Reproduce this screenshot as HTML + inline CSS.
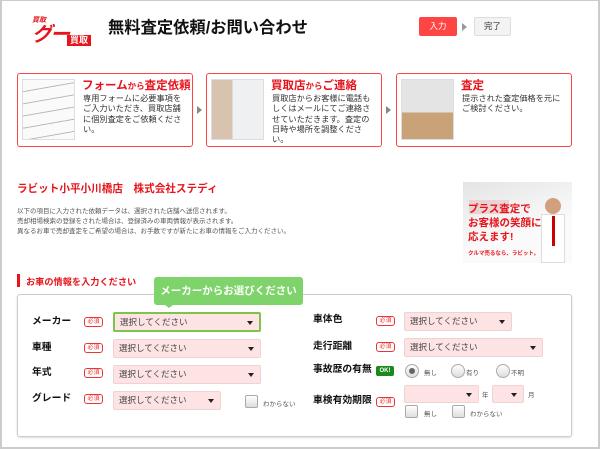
<!DOCTYPE html>
<html><head><meta charset="utf-8"><style>
*{margin:0;padding:0;box-sizing:border-box}
body{width:600px;height:449px;overflow:hidden;background:#fff;font-family:"Liberation Sans","Noto Sans CJK JP",sans-serif;position:relative;color:#222}
.a{position:absolute;white-space:nowrap}
.frame{left:0;top:0;width:600px;height:449px;border:2px solid #ccc;border-top:1px solid #ccc}
.step{border:1px solid #f44;border-radius:3px;height:74px;top:73px;width:176px;background:#fff}
.step .img{position:absolute;left:4px;top:5px;width:53px;height:61px;background:#e8e8e8;border:1px solid #ddd}
.step h3{position:absolute;left:64px;top:3px;color:#e6141c;font-size:11.5px;font-weight:bold;white-space:nowrap}
.step h3 small{font-size:8.5px}
.step p{position:absolute;left:65px;top:20px;font-size:8.2px;line-height:10.3px;color:#333;width:104px;white-space:normal}
.arr{width:0;height:0;border-left:5px solid #888;border-top:4px solid transparent;border-bottom:4px solid transparent;top:106px}
.lbl{font-size:9.8px;font-weight:bold;color:#111;line-height:12px}
.req{font-size:6px;color:#e33;border:1px solid #e33;border-radius:3px;width:19px;height:10px;line-height:8px;text-align:center;background:#fff}
.sel{background:#fde3e3;border:1px solid #efd3d3;border-radius:2px;height:19px;font-size:8.5px;color:#444;padding-left:5px;line-height:17px}
.sel:after{content:"";position:absolute;right:6px;top:7px;border-top:4px solid #222;border-left:3px solid transparent;border-right:3px solid transparent}
.cb{width:13px;height:13px;border:1px solid #aaa;border-radius:2px;background:linear-gradient(#fff,#ddd)}
.rd{width:14px;height:14px;border:1px solid #aaa;border-radius:50%;background:linear-gradient(#fff,#ddd)}
.sm{font-size:6.5px;color:#555}
</style></head><body>
<div class="a frame"></div>
<div class="a" style="left:32px;top:15px;font-size:7px;color:#e6141c;font-style:italic;font-weight:bold">買取</div>
<div class="a" style="left:32px;top:24px;font-size:20px;color:#e6141c;font-style:italic;font-weight:bold;letter-spacing:-2px;line-height:22px">グー</div>
<div class="a" style="left:67px;top:35px;width:24px;height:11px;background:#e6141c;color:#fff;font-size:9px;font-weight:bold;line-height:11px;text-align:center">買取</div>
<div class="a" style="left:108px;top:14px;font-size:16.3px;font-weight:bold;color:#111">無料査定依頼/お問い合わせ</div>
<div class="a" style="left:419px;top:17px;width:38px;height:19px;background:#f44;color:#fff;font-size:8.5px;text-align:center;line-height:19px;border-radius:2px">入力</div>
<div class="a" style="left:462px;top:23px;border-left:5px solid #999;border-top:4px solid transparent;border-bottom:4px solid transparent"></div>
<div class="a" style="left:474px;top:17px;width:37px;height:19px;background:#f3f3f3;border:1px solid #ddd;color:#333;font-size:8.5px;text-align:center;line-height:17px;border-radius:2px">完了</div>
<div class="a step" style="left:17px"><div class="img" style="background:repeating-linear-gradient(170deg,#fafafa 0 11px,#bbb 11px 12px)"></div><h3>フォーム<small>から</small>査定依頼</h3><p>専用フォームに必要事項をご入力いただき、買取店舗に個別査定をご依頼ください。</p></div>
<div class="a arr" style="left:197px"></div>
<div class="a step" style="left:206px"><div class="img" style="background:linear-gradient(90deg,#d8c3b0 0 40%,#eef0f2 40%)"></div><h3>買取店<small>から</small>ご連絡</h3><p>買取店からお客様に電話もしくはメールにてご連絡させていただきます。査定の日時や場所を調整ください。</p></div>
<div class="a arr" style="left:386px"></div>
<div class="a step" style="left:396px"><div class="img" style="background:linear-gradient(#e4e4e4 55%,#c9a277 55%)"></div><h3>査定</h3><p>提示された査定価格を元にご検討ください。</p></div>
<div class="a" style="left:17px;top:181px;font-size:10.6px;font-weight:bold;color:#e6141c">ラビット小平小川橋店　株式会社ステディ</div>
<div class="a" style="left:17px;top:207px;font-size:6.5px;line-height:10px;color:#555">以下の項目に入力された依頼データは、選択された店舗へ送信されます。<br>売却相場検索の登録をされた場合は、登録済みの車両情報が表示されます。<br>異なるお車で売却査定をご希望の場合は、お手数ですが新たにお車の情報をご入力ください。</div>
<div class="a" style="left:463px;top:182px;width:109px;height:81px;background:linear-gradient(160deg,#e4e4e4,#fafafa 60%);overflow:hidden">
<div class="a" style="left:6px;top:18px;width:40px;height:14px;background:#e9b8b8;opacity:.5"></div>
<div class="a" style="left:5px;top:20px;font-size:10.5px;font-weight:bold;color:#e6141c;line-height:14px">プラス査定で<br>お客様の笑顔に<br>応えます!</div>
<div class="a" style="left:5px;top:67px;font-size:5.5px;color:#e6141c;font-weight:bold">クルマ売るなら、ラビット。</div>
<div class="a" style="left:82px;top:16px;width:16px;height:16px;border-radius:50%;background:#d2a07f"></div>
<div class="a" style="left:78px;top:32px;width:24px;height:49px;background:#fff;border:1px solid #ddd"></div>
<div class="a" style="left:89px;top:34px;width:3px;height:30px;background:#c00"></div></div>
<div class="a" style="left:17px;top:274px;width:3px;height:13px;background:#e6141c"></div>
<div class="a" style="left:26px;top:274px;font-size:9.2px;color:#e6141c;font-weight:bold">お車の情報を入力ください</div>
<div class="a" style="left:17px;top:294px;width:555px;height:143px;border:1px solid #ccc;border-radius:3px;box-shadow:0 1px 2px #ddd"></div>
<div class="a" style="left:154px;top:277px;width:149px;height:28px;background:#7ed36a;border-radius:3px;color:#fff;font-size:10.5px;font-weight:bold;text-align:center;line-height:28px">メーカーからお選びください</div>
<div class="a" style="left:165px;top:305px;border-top:3px solid #7ed36a;border-left:4px solid transparent;border-right:4px solid transparent"></div>
<div class="a lbl" style="left:32px;top:316px">メーカー</div><div class="a req" style="left:84px;top:317px">必須</div>
<div class="a sel" style="left:113px;top:312px;width:148px;height:20px;border:2px solid #7cc44a">選択してください</div>
<div class="a lbl" style="left:32px;top:342px">車種</div><div class="a req" style="left:84px;top:343px">必須</div>
<div class="a sel" style="left:113px;top:339px;width:148px">選択してください</div>
<div class="a lbl" style="left:32px;top:367px">年式</div><div class="a req" style="left:84px;top:368px">必須</div>
<div class="a sel" style="left:113px;top:365px;width:148px">選択してください</div>
<div class="a lbl" style="left:32px;top:393px">グレード</div><div class="a req" style="left:84px;top:394px">必須</div>
<div class="a sel" style="left:113px;top:391px;width:108px">選択してください</div>
<div class="a cb" style="left:245px;top:395px"></div><div class="a sm" style="left:263px;top:398px">わからない</div>
<div class="a lbl" style="left:313px;top:314px">車体色</div><div class="a req" style="left:376px;top:316px">必須</div>
<div class="a sel" style="left:404px;top:312px;width:108px">選択してください</div>
<div class="a lbl" style="left:313px;top:341px">走行距離</div><div class="a req" style="left:376px;top:342px">必須</div>
<div class="a sel" style="left:404px;top:338px;width:139px">選択してください</div>
<div class="a lbl" style="left:313px;top:364px">事故歴の有無</div>
<div class="a" style="left:376px;top:366px;width:18px;height:10px;background:#1a8a1a;color:#fff;font-size:6px;font-weight:bold;text-align:center;line-height:10px;border-radius:2px">OK!</div>
<div class="a rd" style="left:405px;top:364px"><div class="a" style="left:3px;top:3px;width:6px;height:6px;border-radius:50%;background:#666"></div></div><div class="a sm" style="left:424px;top:367px">無し</div>
<div class="a rd" style="left:451px;top:364px"></div><div class="a sm" style="left:466px;top:367px">有り</div>
<div class="a rd" style="left:496px;top:364px"></div><div class="a sm" style="left:511px;top:367px">不明</div>
<div class="a lbl" style="left:313px;top:395px">車検有効期限</div><div class="a req" style="left:376px;top:397px">必須</div>
<div class="a sel" style="left:404px;top:385px;width:75px;height:18px"></div><div class="a sm" style="left:482px;top:389px">年</div>
<div class="a sel" style="left:492px;top:385px;width:32px;height:18px"></div><div class="a sm" style="left:528px;top:389px">月</div>
<div class="a cb" style="left:405px;top:405px"></div><div class="a sm" style="left:424px;top:408px">無し</div>
<div class="a cb" style="left:452px;top:405px"></div><div class="a sm" style="left:470px;top:408px">わからない</div>
</body></html>
